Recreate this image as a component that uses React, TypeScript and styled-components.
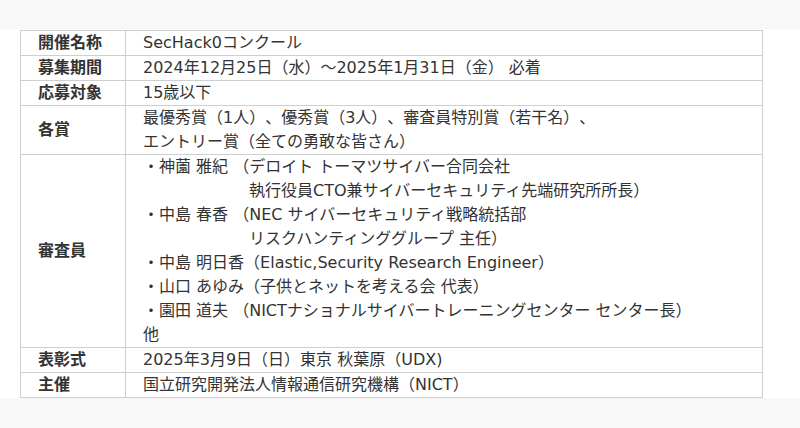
import React from "react";
import styled, { createGlobalStyle } from "styled-components";

const Global = createGlobalStyle`
  html, body { margin: 0; padding: 0; background: #f8f8f8; }
  body { font-family: "DejaVu Sans", "Noto Sans CJK JP", sans-serif; color: #333; }
`;

const Page = styled.div`
  padding-top: 29px;
  padding-bottom: 30px;
`;

const Band = styled.section`
  background: #fff;
  padding: 1px 0 0 20px;
`;

const Table = styled.table`
  width: 743px;
  border-collapse: collapse;
  font-size: 16px;
  line-height: 24px;
  color: #333;
  text-spacing-trim: space-all;
`;

const Th = styled.th`
  width: 70px;
  border: 1px solid #cfcfcf;
  padding: 0 17px 0 17px;
  text-align: left;
  vertical-align: middle;
  font-weight: bold;
  white-space: nowrap;
`;

const Td = styled.td`
  border: 1px solid #cfcfcf;
  padding: 0 17px;
  text-align: left;
  vertical-align: middle;
  white-space: nowrap;
`;

const Line = styled.div<{ $indent?: boolean }>`
  padding-left: ${(p) => (p.$indent ? "106px" : "0")};
`;

const rows: { label: string; lines: { text: string; indent?: boolean }[] }[] = [
  { label: "開催名称", lines: [{ text: "SecHack0コンクール" }] },
  { label: "募集期間", lines: [{ text: "2024年12月25日（水）～2025年1月31日（金） 必着" }] },
  { label: "応募対象", lines: [{ text: "15歳以下" }] },
  {
    label: "各賞",
    lines: [
      { text: "最優秀賞（1人）、優秀賞（3人）、審査員特別賞（若干名）、" },
      { text: "エントリー賞（全ての勇敢な皆さん）" },
    ],
  },
  {
    label: "審査員",
    lines: [
      { text: "・神薗 雅紀 （デロイト トーマツサイバー合同会社" },
      { text: "執行役員CTO兼サイバーセキュリティ先端研究所所長）", indent: true },
      { text: "・中島 春香 （NEC サイバーセキュリティ戦略統括部" },
      { text: "リスクハンティンググループ 主任）", indent: true },
      { text: "・中島 明日香（Elastic,Security Research Engineer）" },
      { text: "・山口 あゆみ（子供とネットを考える会 代表）" },
      { text: "・園田 道夫 （NICTナショナルサイバートレーニングセンター センター長）" },
      { text: "他" },
    ],
  },
  { label: "表彰式", lines: [{ text: "2025年3月9日（日）東京 秋葉原（UDX)" }] },
  { label: "主催", lines: [{ text: "国立研究開発法人情報通信研究機構（NICT）" }] },
];

export default function App() {
  return (
    <Page>
      <Global />
      <Band>
        <Table>
          <tbody>
            {rows.map((r) => (
              <tr key={r.label}>
                <Th>{r.label}</Th>
                <Td>
                  {r.lines.map((l, i) => (
                    <Line key={i} $indent={l.indent}>
                      {l.text}
                    </Line>
                  ))}
                </Td>
              </tr>
            ))}
          </tbody>
        </Table>
      </Band>
    </Page>
  );
}
